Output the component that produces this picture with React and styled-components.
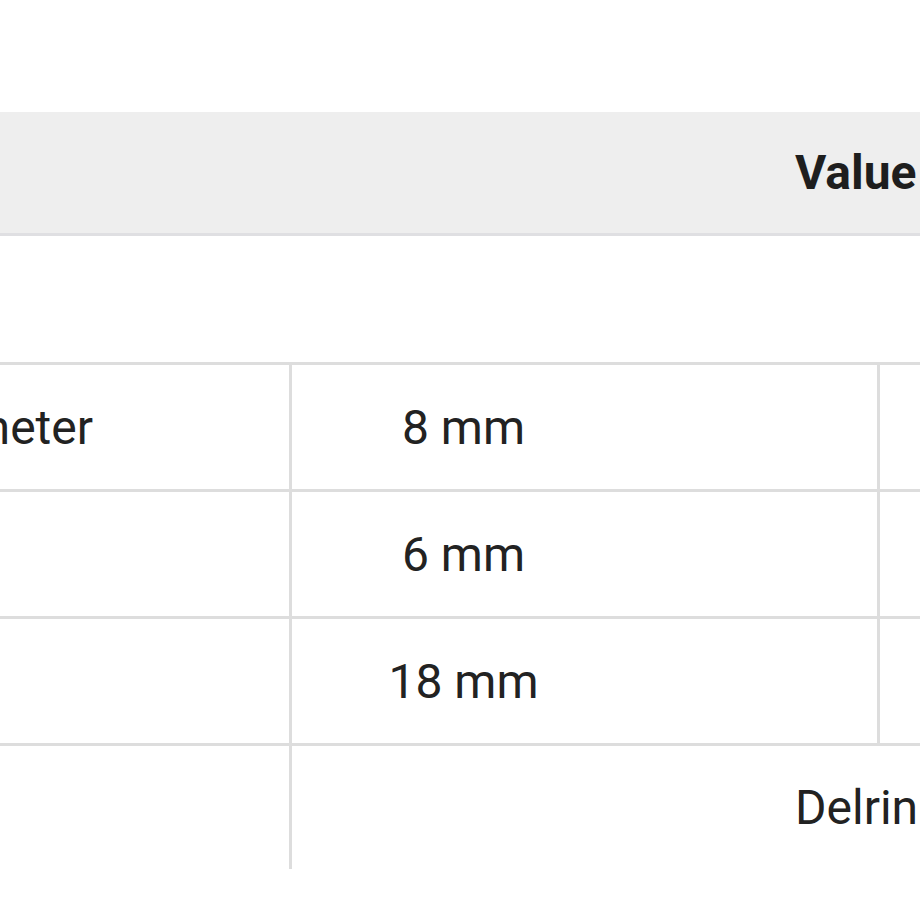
import styled, { createGlobalStyle } from "styled-components";

const GlobalStyle = createGlobalStyle`
  html, body {
    margin: 0;
    padding: 0;
    background: #ffffff;
  }
  body {
    font-family: Roboto, "Liberation Sans", Arial, sans-serif;
    color: #222222;
  }
`;

const Page = styled.div`
  width: 920px;
  height: 920px;
  overflow: hidden;
  padding-top: 112px;
  box-sizing: border-box;
`;

const HeaderBar = styled.div`
  display: flex;
  align-items: center;
  height: 121px;
  padding-left: 795px;
  background: #eeeeee;
  border-bottom: 3px solid #dfdfe2;
  font-size: 48px;
  font-weight: 700;
  color: #1e1e1e;
  white-space: nowrap;
`;

const SpecTable = styled.div`
  margin-top: 126px;
  margin-left: -300px;
  width: 1320px;
  display: flex;
  flex-direction: column;
`;

const Row = styled.div`
  display: grid;
  grid-template-columns: 589px 588px 1fr;
  height: ${(p) => (p.$last ? "123px" : "124px")};
  border-top: 3px solid #dddddd;
`;

const LabelCell = styled.div`
  display: flex;
  align-items: center;
  justify-content: flex-end;
  padding-right: 196px;
  font-size: 48px;
  white-space: nowrap;
  visibility: ${(p) => (p.$hidden ? "hidden" : "visible")};
`;

const ValueCell = styled.div`
  display: flex;
  align-items: center;
  justify-content: center;
  padding-right: 242px;
  border-left: 3px solid #dddddd;
  font-size: 48px;
  white-space: nowrap;
`;

const SpanCell = styled.div`
  grid-column: 2 / 4;
  display: flex;
  align-items: center;
  padding-left: 503px;
  border-left: 3px solid #dddddd;
  font-size: 48px;
  white-space: nowrap;
`;

const EmptyCell = styled.div`
  border-left: 3px solid #dddddd;
`;

const rows = [
  { label: "Diameter", value: "8 mm" },
  { label: "Bore", value: "6 mm" },
  { label: "Width", value: "18 mm" },
];

export default function App() {
  return (
    <Page>
      <GlobalStyle />
      <HeaderBar>Value</HeaderBar>
      <SpecTable>
        {rows.map((row, i) => (
          <Row key={row.value}>
            <LabelCell $hidden={i !== 0}>{row.label}</LabelCell>
            <ValueCell>{row.value}</ValueCell>
            <EmptyCell />
          </Row>
        ))}
        <Row $last>
          <LabelCell />
          <SpanCell>Delrin</SpanCell>
        </Row>
      </SpecTable>
    </Page>
  );
}
